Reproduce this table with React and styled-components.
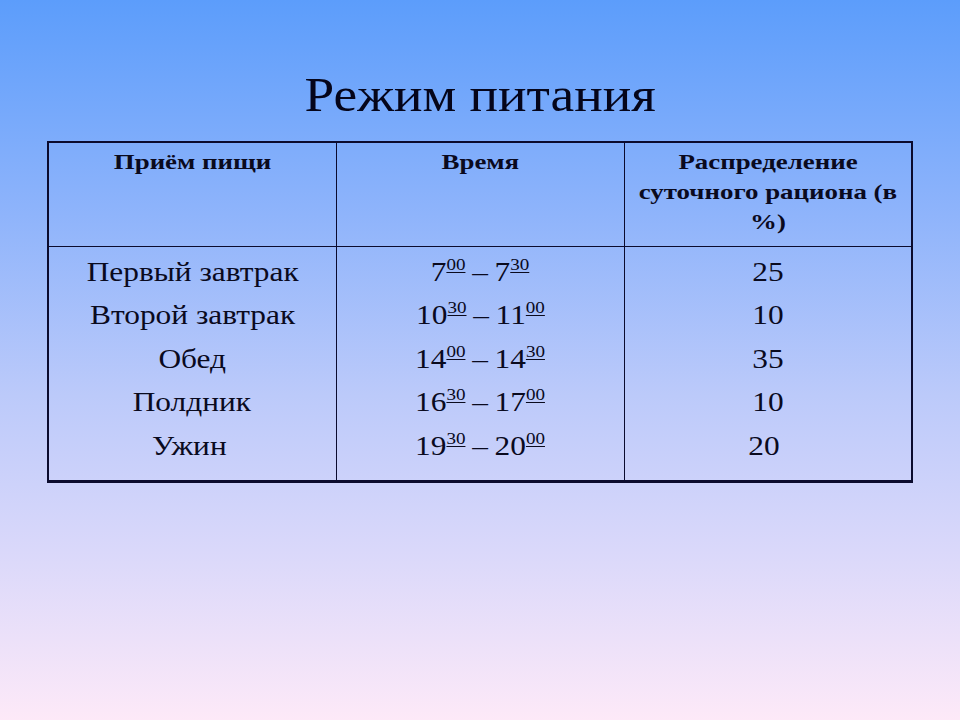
import React from 'react';
import styled, { createGlobalStyle } from 'styled-components';

const GlobalStyle = createGlobalStyle`
  html, body {
    margin: 0;
    padding: 0;
  }
  body {
    font-family: "Liberation Serif", "Times New Roman", serif;
    color: #000;
  }
`;

const Slide = styled.div`
  width: 960px;
  height: 720px;
  box-sizing: border-box;
  padding: 66px 47px 0 47px;
  background: linear-gradient(to bottom, #5c9dfb 0%, #8fb4fb 30%, #bccafa 55%, #dcd9fa 78%, #fde9f8 100%);
  display: flex;
  flex-direction: column;
  align-items: stretch;
`;

const Title = styled.h1`
  margin: 0 0 17px 0;
  font-family: "Liberation Serif", "Times New Roman", serif;
  font-weight: normal;
  font-size: 48px;
  line-height: 58px;
  text-align: center;
  color: #05051a;
`;

/* the slide text is a little wider than plain Times, so stretch it */
const Stretch = styled.span`
  display: inline-block;
  white-space: nowrap;
  transform: scaleX(${(p) => p.$x || 1.12});
  transform-origin: center;
`;

const Table = styled.table`
  width: 866px;
  border-collapse: collapse;
  border-top: 2px solid #0b0b2e;
  border-left: 2px solid #0b0b2e;
  border-right: 2px solid #0b0b2e;
  border-bottom: 3px solid #0b0b2e;
  table-layout: fixed;
`;

const HeadCell = styled.th`
  height: 104px;
  box-sizing: border-box;
  padding: 4px 10px 0 10px;
  vertical-align: top;
  border-left: 1px solid #0b0b2e;
  border-bottom: 1px solid #0b0b2e;
  font-family: "Liberation Serif", "Times New Roman", serif;
  font-weight: bold;
  font-size: 21px;
  line-height: 30px;
  text-align: center;
  color: #0a0a1e;
  &:first-child {
    border-left: none;
  }
`;

const BodyCell = styled.td`
  box-sizing: border-box;
  padding: 3px 4px 13px 4px;
  vertical-align: top;
  border-left: 1px solid #0b0b2e;
  font-size: 28px;
  line-height: 43.5px;
  text-align: center;
  color: #0a0a1e;
  &:first-child {
    border-left: none;
  }
`;

const Line = styled.div`
  white-space: nowrap;
  margin-left: ${(p) => p.$shift || 0}px;
`;

const Min = styled.sup`
  font-size: 17px;
  line-height: 0;
  vertical-align: 11px;
  text-decoration: underline;
  text-underline-offset: 2px;
  text-decoration-thickness: 1px;
`;

const Dash = styled.span`
  margin: 0 6px;
`;

const headers = [
  ['Приём пищи'],
  ['Время'],
  ['Распределение', 'суточного рациона (в', '%)'],
];

const meals = [
  { name: 'Первый завтрак', from: ['7', '00'], to: ['7', '30'], share: '25' },
  { name: 'Второй завтрак', from: ['10', '30'], to: ['11', '00'], share: '10' },
  { name: 'Обед', from: ['14', '00'], to: ['14', '30'], share: '35' },
  { name: 'Полдник', from: ['16', '30'], to: ['17', '00'], share: '10' },
  { name: 'Ужин', from: ['19', '30'], to: ['20', '00'], share: '20', shift: -8 },
];

const Time = ({ value }) => (
  <>
    {value[0]}
    <Min>{value[1]}</Min>
  </>
);

export default function App() {
  return (
    <>
      <GlobalStyle />
      <Slide>
        <Title>
          <Stretch $x={1.11}>Режим питания</Stretch>
        </Title>
        <Table>
          <thead>
            <tr>
              {headers.map((lines) => (
                <HeadCell key={lines[0]}>
                  {lines.map((l) => (
                    <Line key={l}>
                      <Stretch $x={1.28}>{l}</Stretch>
                    </Line>
                  ))}
                </HeadCell>
              ))}
            </tr>
          </thead>
          <tbody>
            <tr>
              <BodyCell>
                {meals.map((m) => (
                  <Line key={m.name} $shift={m.shift ? -6 : 0}>
                    <Stretch>{m.name}</Stretch>
                  </Line>
                ))}
              </BodyCell>
              <BodyCell>
                {meals.map((m) => (
                  <Line key={m.name}>
                    <Stretch>
                      <Time value={m.from} />
                      <Dash>–</Dash>
                      <Time value={m.to} />
                    </Stretch>
                  </Line>
                ))}
              </BodyCell>
              <BodyCell>
                {meals.map((m) => (
                  <Line key={m.name} $shift={m.shift || 0}>
                    <Stretch>{m.share}</Stretch>
                  </Line>
                ))}
              </BodyCell>
            </tr>
          </tbody>
        </Table>
      </Slide>
    </>
  );
}
